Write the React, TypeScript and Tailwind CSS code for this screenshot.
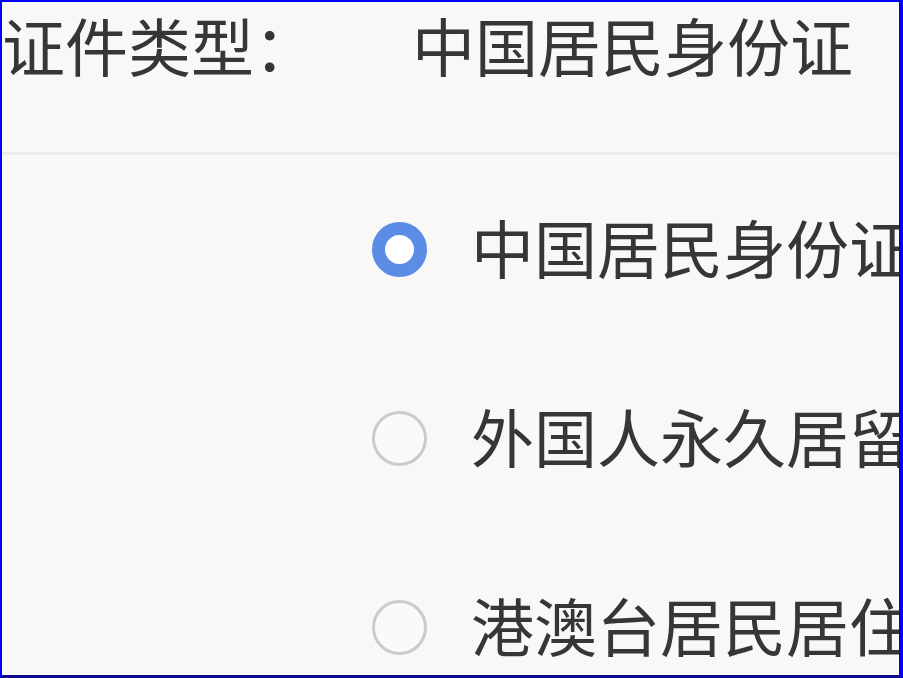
import React, { useState } from "react";

const options = ["中国居民身份证", "外国人永久居留身份证", "港澳台居民居住证"];

const font = { fontFamily: '"Noto Sans CJK SC", "Noto Sans", sans-serif' };

export default function App() {
  const [selected, setSelected] = useState<number>(0);

  return (
    <div
      className="w-[903px] h-[678px] overflow-hidden bg-[#f8f8f8] text-[#363636] border-l-2 border-t-2 border-r-[4px] border-b-[3px] border-l-[#0000ff] border-t-[#0000ff] border-r-[#0000ff] border-b-[#0c0c8c] flex flex-col"
      style={font}
    >
      <div className="h-[153px] flex flex-row items-start pt-[5px] border-b-[3px] border-[#ebebeb] shrink-0">
        <div className="w-[410px] text-[63px] leading-[73px] whitespace-nowrap">证件类型：</div>
        <div className="text-[63px] leading-[73px] whitespace-nowrap">{options[selected]}</div>
      </div>
      <div className="flex flex-col">
        {options.map((option, index) => (
          <button
            key={option}
            className="h-[189px] flex flex-row items-center pl-[370px] text-left shrink-0"
            onClick={() => setSelected(index)}
          >
            {index === selected ? (
              <span className="w-[55px] h-[55px] rounded-full border-[13px] border-[#5b8de6] bg-white shrink-0" />
            ) : (
              <span className="w-[55px] h-[55px] rounded-full border-[3px] border-[#cbcbcb] bg-[#fafafa] shrink-0" />
            )}
            <span className="ml-[44px] mb-[8px] text-[63px] leading-[73px] whitespace-nowrap">{option}</span>
          </button>
        ))}
      </div>
    </div>
  );
}
